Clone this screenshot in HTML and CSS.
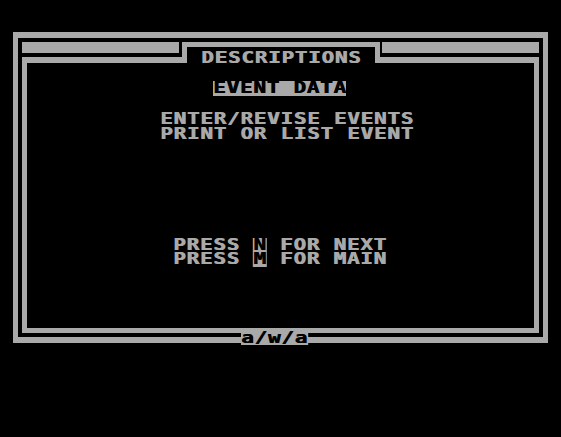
FILE: index.html
```html
<!DOCTYPE html>
<html>
<head>
<meta charset="utf-8">
<title>Descriptions</title>
<link rel="stylesheet" href="styles.css">
</head>
<body>
  <div class="screen">
    <div class="frame">
      <div class="head">
        <div class="bar bar-l"></div>
        <div class="tab"><div class="line"><span class="txt">DESCRIPTIONS</span></div></div>
        <div class="bar bar-r"></div>
        <div class="rule rule-l"></div>
        <div class="rule rule-r"></div>
      </div>
      <div class="panel">
        <div class="line l-heading"><span class="txt inv">EVENT DATA</span></div>
        <div class="line l-menu"><span class="txt">ENTER/REVISE EVENTS</span></div>
        <div class="line l-menu-next"><span class="txt">PRINT OR LIST EVENT</span></div>
        <div class="line l-press"><span class="txt">PRESS <span class="key">N</span> FOR NEXT</span></div>
        <div class="line l-press-next"><span class="txt">PRESS <span class="key">M</span> FOR MAIN</span></div>
      </div>
      <div class="badge"><span class="txt inv">a/w/a</span></div>
    </div>
  </div>
</body>
</html>
```

FILE: styles.css
```css
/* 40-column character screen: one cell is 13.36px wide, 14.6px tall */
html, body {
  margin: 0;
  background: #000;
}

body {
  width: 561px;
  height: 437px;
  overflow: hidden;
}

.screen {
  padding: 32px 13px 0 13px;
}

/* outer double-line border */
.frame {
  position: relative;
  width: 535px;
  box-sizing: border-box;
  border: solid #a9a9a9;
  border-width: 6px 5px 6px 5px;
  padding: 4px;
}

/* top strip: two bars with the title tab between them */
.head {
  display: grid;
  grid-template-columns: 157px 3px 198px 2px 157px;
  grid-template-rows: 15px 6px;
  height: 21px;
}

.bar {
  grid-row: 1;
  height: 11px;
  background: #a9a9a9;
}

.bar-l { grid-column: 1; }
.bar-r { grid-column: 5; }

.rule {
  grid-row: 2;
  background: #a9a9a9;
}

.rule-l { grid-column: 1 / 3; }
.rule-r { grid-column: 4 / 6; }

.tab {
  grid-column: 3;
  grid-row: 1 / 3;
  border: 5px solid #a9a9a9;
  border-bottom: 0;
  padding: 1.5px 0 0 14px;
  height: 21px;
  box-sizing: border-box;
  overflow: visible;
}

/* inner border */
.panel {
  display: flow-root;
  height: 270px;
  box-sizing: border-box;
  border: 5px solid #a9a9a9;
  border-top: 0;
}

.line {
  height: 14.6px;
}

.l-heading {
  margin: 16.3px 0 0 186.4px;
}

.l-menu {
  margin: 16.1px 0 0 133px;
}

.l-menu-next {
  margin: 0 0 0 133px;
}

.l-press {
  margin: 96.4px 0 0 146.4px;
}

.l-press-next {
  margin: 0 0 0 146.4px;
}

.txt {
  display: inline-block;
  font-family: "DejaVu Sans Mono", "Liberation Mono", monospace;
  font-weight: bold;
  font-size: 15px;
  line-height: 14.6px;
  height: 14.6px;
  letter-spacing: 0.51px;
  white-space: pre;
  color: #a9a9a9;
  text-shadow: 0.6px 0 0 currentColor;
  transform: scaleX(1.4);
  transform-origin: 0 0;
}

.inv {
  background: #a9a9a9;
  color: #000;
}

.key {
  display: inline-block;
  height: 14.6px;
  background: #a9a9a9;
  color: #000;
}

/* label set into the bottom border */
.badge {
  position: absolute;
  left: 223px;
  top: 290.5px;
  width: 67px;
  height: 14.6px;
  background: #a9a9a9;
}
```
